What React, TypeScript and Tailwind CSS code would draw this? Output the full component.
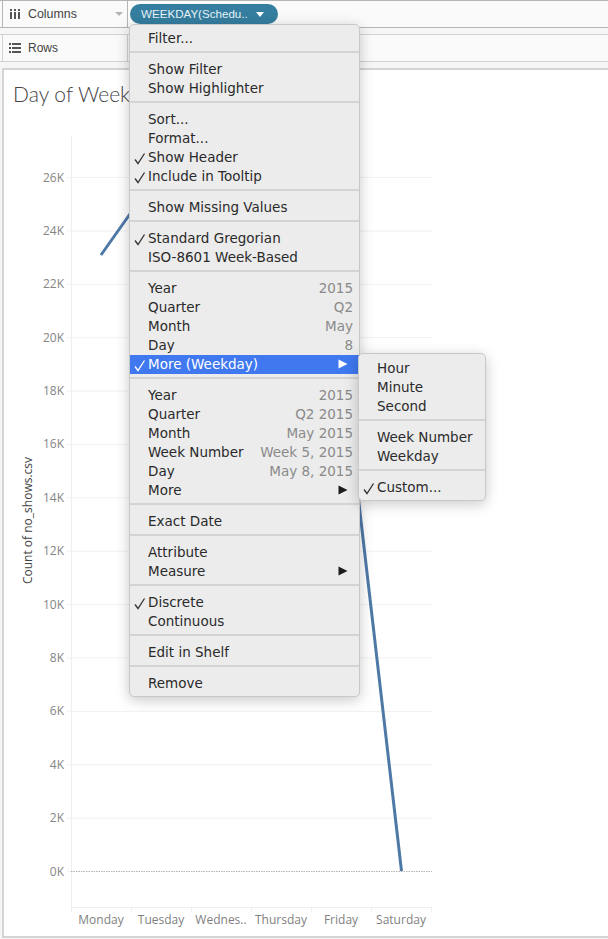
import React from "react";

const F = { menu: "font-['DejaVu_Sans',sans-serif]" };

function Check({ white = false }: { white?: boolean }) {
  return (
    <svg width="12" height="13" viewBox="0 0 12 13" className="absolute left-[4px] top-[4px]" fill="none">
      <path d="M1 7.5 L4 11.5 L10.5 1.5" stroke={white ? "#ffffff" : "#333333"} strokeWidth="1.3" />
    </svg>
  );
}

function Arrow({ white = false }: { white?: boolean }) {
  return (
    <svg width="10" height="10" viewBox="0 0 10 10" className="absolute right-[11px] top-[4px]">
      <path d="M0.5 0.5 L9.5 5 L0.5 9.5 Z" fill={white ? "#ffffff" : "#1c1c1c"} />
    </svg>
  );
}

type Item = { t: string; v?: string; c?: boolean; a?: boolean; h?: boolean };

function Row({ t, v, c, a, h }: Item) {
  return (
    <div className={`relative flex h-[19px] items-center justify-between whitespace-nowrap pl-[18px] pr-[6px] ${h ? "bg-[#3f78ef] text-white" : "text-[#2a2a2a]"}`}>
      {c && <Check white={h} />}
      <span>{t}</span>
      {v && <span className="text-[#8a8a8a]">{v}</span>}
      {a && <Arrow white={h} />}
    </div>
  );
}

function Menu({ groups, className }: { groups: Item[][]; className: string }) {
  return (
    <div className={`absolute z-10 rounded-[5px] border border-[#c8c8c8] bg-[#ececec] text-[13.5px] shadow-[0_3px_14px_rgba(0,0,0,0.22)] ${F.menu} ${className}`}>
      {groups.map((g, i) => (
        <div key={i}>
          {i > 0 && <div className="mb-[7px] mt-[3px] h-[2px] bg-[#d4d4d4]" />}
          {g.map((it) => (
            <Row key={it.t} {...it} />
          ))}
        </div>
      ))}
    </div>
  );
}

const mainGroups: Item[][] = [
  [{ t: "Filter..." }],
  [{ t: "Show Filter" }, { t: "Show Highlighter" }],
  [{ t: "Sort..." }, { t: "Format..." }, { t: "Show Header", c: true }, { t: "Include in Tooltip", c: true }],
  [{ t: "Show Missing Values" }],
  [{ t: "Standard Gregorian", c: true }, { t: "ISO-8601 Week-Based" }],
  [
    { t: "Year", v: "2015" },
    { t: "Quarter", v: "Q2" },
    { t: "Month", v: "May" },
    { t: "Day", v: "8" },
    { t: "More (Weekday)", c: true, a: true, h: true },
  ],
  [
    { t: "Year", v: "2015" },
    { t: "Quarter", v: "Q2 2015" },
    { t: "Month", v: "May 2015" },
    { t: "Week Number", v: "Week 5, 2015" },
    { t: "Day", v: "May 8, 2015" },
    { t: "More", a: true },
  ],
  [{ t: "Exact Date" }],
  [{ t: "Attribute" }, { t: "Measure", a: true }],
  [{ t: "Discrete", c: true }, { t: "Continuous" }],
  [{ t: "Edit in Shelf" }],
  [{ t: "Remove" }],
];

const subGroups: Item[][] = [
  [{ t: "Hour" }, { t: "Minute" }, { t: "Second" }],
  [{ t: "Week Number" }, { t: "Weekday" }],
  [{ t: "Custom...", c: true }],
];

function Chart() {
  const ticks = Array.from({ length: 14 }, (_, i) => i * 2);
  const y = (k: number) => 871 - k * 26.69;
  const days = ["Monday", "Tuesday", "Wednes..", "Thursday", "Friday", "Saturday"];
  return (
    <svg viewBox="4 130 604 806" className="block h-[806px] w-[604px]" fontFamily="'Open Sans', sans-serif">
      {ticks.map((k) => (
        <g key={k}>
          <line x1="67" x2={k > 0 ? 432 : 71} y1={y(k) + 0.5} y2={y(k) + 0.5} stroke="#f1f1f1" />
          <text x="64" y={y(k) + 4.5} textAnchor="end" fontSize="12" fill="#858585">
            {k}K
          </text>
        </g>
      ))}
      <line x1="71.5" x2="71.5" y1="136" y2="912" stroke="#efefef" />
      <line x1="71" x2="432" y1="907.5" y2="907.5" stroke="#efefef" />
      {[131, 191, 251, 311, 371, 431].map((x) => (
        <line key={x} x1={x + 0.5} x2={x + 0.5} y1="907" y2="912" stroke="#efefef" />
      ))}
      <line x1="71" x2="432" y1="871.5" y2="871.5" stroke="#b4b4b4" strokeDasharray="1.5 1" />
      <path d="M101 255 L161 170 M341 348 L401.5 871" stroke="#4e79a7" strokeWidth="3" fill="none" />
      {days.map((d, i) => (
        <text key={d} x={101 + i * 60} y="924" textAnchor="middle" fontSize="12" fill="#7f7f7f">
          {d}
        </text>
      ))}
      <text transform="translate(32 520.5) rotate(-90)" textAnchor="middle" fontSize="12" fill="#444444">
        Count of no_shows.csv
      </text>
    </svg>
  );
}

export default function App() {
  return (
    <div className="relative h-[939px] w-[608px] overflow-hidden bg-[#f6f6f6] font-['Liberation_Sans',sans-serif]">
      <div className="flex h-[28px] border-y border-[#b4b4b4] bg-[#fafafa] pl-[2px]">
        <div className="flex w-[126px] items-center border-x border-[#b4b4b4] pl-[7px] pr-[4px] text-[12.4px] text-[#444444]">
          <svg width="11" height="10" viewBox="0 0 11 10" fill="#555555">
            <rect x="0" y="3" width="2" height="7" />
            <rect x="4" y="3" width="2" height="7" />
            <rect x="8" y="3" width="2" height="7" />
            <rect x="0" y="0" width="2" height="2" />
            <rect x="4" y="0" width="2" height="2" />
            <rect x="8" y="0" width="2" height="2" />
          </svg>
          <span className="ml-[7px]">Columns</span>
          <svg width="8" height="4" viewBox="0 0 8 4" className="ml-auto" fill="#b4b4b4">
            <path d="M0 0 H8 L4 4 Z" />
          </svg>
        </div>
        <div className="ml-[2px] mt-[3px] flex h-[20px] w-[148px] items-center rounded-full bg-[#357e9f] pl-[11px] text-[11.6px] text-[#e8f2f6]">
          <span>WEEKDAY(Schedu..</span>
          <svg width="8" height="5" viewBox="0 0 8 5" className="ml-[8px]" fill="#ffffff">
            <path d="M0 0 H8 L4 5 Z" />
          </svg>
        </div>
      </div>
      <div className="mt-[6px] flex h-[28px] border-y border-[#d2d2d2] bg-[#fafafa] pl-[2px]">
        <div className="flex w-[126px] items-center border-x border-[#d2d2d2] pl-[6px] text-[12px] text-[#444444]">
          <svg width="12" height="10" viewBox="0 0 12 10" fill="#555555">
            <rect x="0" y="0" width="2" height="2" />
            <rect x="3" y="0" width="9" height="2" />
            <rect x="0" y="4" width="2" height="2" />
            <rect x="3" y="4" width="9" height="2" />
            <rect x="0" y="8" width="2" height="2" />
            <rect x="3" y="8" width="9" height="2" />
          </svg>
          <span className="ml-[7px]">Rows</span>
        </div>
      </div>
      <div className="ml-[2px] mt-[6px] h-[870px] border-2 border-r-0 border-[#d4d4d4] bg-white">
        <div className="h-[60px] pl-[9px] pt-[9px] font-['Lato',sans-serif] text-[21px] font-light leading-[30px] text-[#444444]">Day of Week</div>
        <Chart />
      </div>
      <Menu groups={mainGroups} className="left-[129px] top-[24px] w-[231px] pb-[3px] pt-[4px]" />
      <Menu groups={subGroups} className="left-[358px] top-[353px] w-[128px] pb-[3px] pt-[5px]" />
    </div>
  );
}
